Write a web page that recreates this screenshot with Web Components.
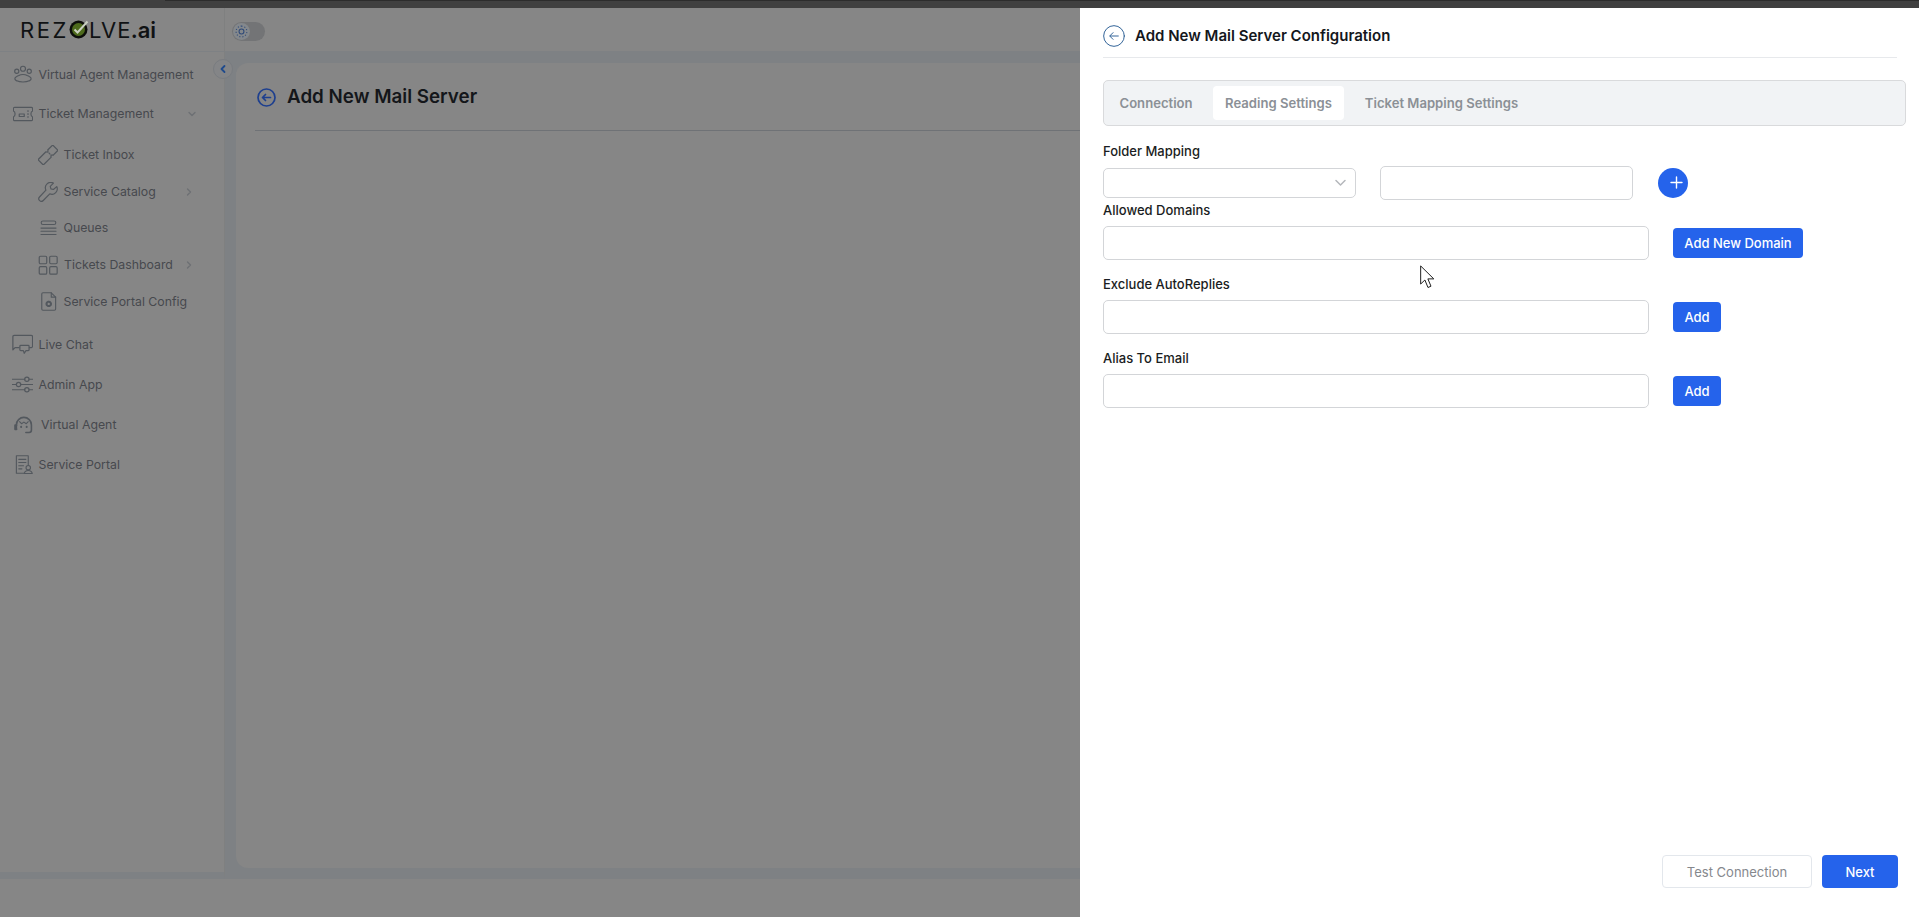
<!doctype html>
<html lang="en"><head><meta charset="utf-8"><title>Add New Mail Server</title>
<style>
html,body{margin:0;height:100%;overflow:hidden;background:#868686;font-family:Inter,"Liberation Sans",sans-serif}
</style></head><body>
<app-shell>
  <side-nav slot="side"></side-nav>
  <main-card slot="main"></main-card>
  <config-drawer slot="drawer"></config-drawer>
</app-shell>
<script>
const ICONS={
 agents:'<circle cx="12" cy="4.500" r="3"/><circle cx="4.500" cy="7.500" r="2.500"/><circle cx="19.500" cy="7.500" r="2.500"/><path d="M7 12.500c2.500-1.500 7.500-1.500 10 0 2 1 3.500 1.500 4.500 3 .8 1.500-.5 3-2 3.500-4 1.800-11 1.800-15 0-1.500-.5-2.800-2-2-3.500 1-1.500 2.500-2 4.500-3z"/>',
 ticket:'<path d="M2 4h20a1.500 1.500 0 0 1 1.500 1.500v3q-2 .8-2 3.500t2 3.500v3A1.500 1.500 0 0 1 22 20H2a1.500 1.500 0 0 1-1.500-1.500v-3q2-.8 2-3.500T.5 8.500v-3A1.500 1.500 0 0 1 2 4z"/><path d="M7.500 12h6v3h-6zM18 8v1M18 11.500v1M18 15v1"/>',
 inbox:'<g transform="rotate(-45 12 12)"><path d="M-.5 7.500H13q.3 1.500 1.500 1.500T16 7.500h8.500v9H16q-.3-1.500-1.500-1.500T13 16.500H-.5z"/><path d="M14.500 11v2"/></g>',
 wrench:'<path d="M22.500 5.500l-4 3.500-3-.8-.8-3 3.800-3.900A6.500 6.500 0 0 0 9.500 9.800L1.800 18a3 3 0 0 0 4.500 4.200l7.800-8a6.500 6.500 0 0 0 8.400-8.700z"/>',
 queues:'<path d="M5 2.500h14a1.800 1.800 0 0 1 0 4.500H5a1.800 1.800 0 0 1 0-4.500zM2.500 11.500h19M2.500 15.500h19M2.500 19.500h19"/>',
 grid:'<rect x="1.500" y="1.500" width="9" height="9" rx="1.500"/><rect x="14" y="1.500" width="9" height="9" rx="1.500"/><rect x="1.500" y="14" width="9" height="9" rx="1.500"/><rect x="14" y="14" width="9" height="9" rx="1.500"/>',
 doc:'<path d="M5 1h10.500l5.500 5.500V21.500a1.500 1.500 0 0 1-1.500 1.500H5a1.500 1.500 0 0 1-1.500-1.500V2.500A1.500 1.500 0 0 1 5 1z"/><path d="M15.500 1v5.500H21"/><circle cx="12.300" cy="15" r="2.800" stroke-dasharray="2.200 .8" stroke-width="2.600"/>',
 chat:'<path d="M20 15.500h2a1.500 1.500 0 0 0 1.500-1.500V3A1.500 1.500 0 0 0 22 1.500H2.500A1.500 1.500 0 0 0 1 3v14.500M8 15.500H3.500L1 18"/><path d="M10 13h8.500a1 1 0 0 1 1 1v4a1 1 0 0 1-1 1H16l-2 3-1-3h-3a1 1 0 0 1-1-1v-4a1 1 0 0 1 1-1z"/>',
 sliders:'<path d="M.5 6h14M19.500 6h4M.5 12h4.500M10 12h13.500M.5 18h14M19.500 18h4"/><circle cx="17" cy="6" r="2.500"/><circle cx="7.500" cy="12" r="2.500"/><circle cx="17" cy="18" r="2.500"/>',
 agent:'<path d="M3 18v-5.500a9.500 9.500 0 0 1 19 0V19a3 3 0 0 1-3 3h-4" stroke-width="2"/><path d="M3 13H1.500v5H3" stroke-width="2.500"/><path d="M7 8.500l2.500 2.500 3-2 3 2 2.500-2.500"/><circle cx="9" cy="15" r=".6"/><circle cx="16" cy="15" r=".6"/>',
 portal:'<path d="M18 12.500V1H3v22h10"/><path d="M6 5.500h9M6 9.500h9M6 13.500h6M6 17.500h4"/><circle cx="18" cy="16" r="2.800"/><path d="M13 23.500q.5-4 5-4t5 4z"/>'
};
const svg=(name,size)=>`<svg width="${size}" height="${size}" viewBox="0 0 24 24" fill="none" stroke="currentColor" stroke-width="1.400" stroke-linecap="round" stroke-linejoin="round">${ICONS[name]}</svg>`;

customElements.define('app-shell',class extends HTMLElement{
 constructor(){super();this.attachShadow({mode:'open'}).innerHTML=`<style>
 :host{display:flex;flex-direction:column;height:917px;position:relative;overflow:hidden;background:#868686}
 .top{height:8px;flex:none;background:#404040}
 .top::before{content:"";display:block;height:1px;margin-left:165px;background:#2c2c2c}
 .body{flex:1;display:grid;grid-template-columns:225px 1fr;grid-template-rows:44px 1fr;min-height:0}
 .brand{border-right:1px solid #7f8080;border-bottom:1px solid #7e8184;display:flex;align-items:center;padding-left:20px}
 .bar{border-bottom:1px solid #7e8184;display:flex;align-items:center;padding:3px 0 0 7px}
 .sidecol{border-right:1px solid #7f8080;height:827px;box-sizing:border-box;border-bottom:7px solid #7e8184;position:relative}
 .maincol{height:827px;box-sizing:border-box;background:#7e8184;padding:11px 0 11px 11px;display:flex}
 .maincol ::slotted(main-card){flex:1}
 .collapse{position:absolute;right:-9px;top:7px;width:20px;height:20px;box-sizing:border-box;border-radius:50%;background:#848587;border:1px solid #797c80;display:flex;align-items:center;justify-content:center;color:#1f4a8c}
 .toggle{width:33px;height:19px;border-radius:10px;background:#737476;position:relative}
 .toggle i{position:absolute;left:1px;top:1px;width:17px;height:17px;border-radius:50%;background:#84888c;display:flex;align-items:center;justify-content:center;color:#2f4a78}
 .logo{font:400 22px/1 Inter,"Liberation Sans",sans-serif;letter-spacing:1.100px;color:#101214;display:flex;align-items:center}
 .logo .rez{letter-spacing:2.600px}
 .logo svg{margin:-1px -1px 0 0;flex:none}
 .ai{font-weight:600;letter-spacing:0;margin-left:-1px}
 </style>
 <div class="top"></div>
 <div class="body">
  <div class="brand"><div class="logo" aria-label="REZOLVE.ai"><span class="rez">REZ</span><svg width="21" height="20" viewBox="0 0 21 20"><circle cx="9.500" cy="10.500" r="9" fill="#0c0d0a"/><circle cx="9.500" cy="10.500" r="6.500" fill="#4d6a1c"/><path d="M5.500 10.500l3 3 10-11" fill="none" stroke="#c9cfc0" stroke-width="2"/></svg><span>LVE</span><span class="ai">.ai</span></div></div>
  <div class="bar"><div class="toggle"><i><svg width="13" height="13" viewBox="0 0 24 24" fill="none" stroke="currentColor" stroke-width="2"><circle cx="12" cy="12" r="4.500"/><path stroke-dasharray="2 3.500" d="M12 2a10 10 0 1 1-.01 0"/></svg></i></div></div>
  <div class="sidecol"><slot name="side"></slot><div class="collapse"><svg width="10" height="10" viewBox="0 0 10 10" fill="none" stroke="currentColor" stroke-width="1.800" stroke-linecap="round" stroke-linejoin="round"><path d="M6.500 2L3.500 5l3 3"/></svg></div></div>
  <div class="maincol"><slot name="main"></slot></div>
 </div>
 <slot name="drawer"></slot>`;}
});

customElements.define('nav-item',class extends HTMLElement{
 constructor(){super();this.attachShadow({mode:'open'}).innerHTML=`<style>
 :host{display:flex;align-items:center;font:400 12.300px/16px Inter,"Liberation Sans",sans-serif;color:#47494e;box-sizing:border-box;position:relative;flex:none}
 .ic{display:flex;color:#53585e;flex:none}
 .lab{white-space:nowrap}
 .car{position:absolute;display:flex;color:#6d7074}
 </style><span class="ic"></span><span class="lab"><slot></slot></span><span class="car"></span>`;}
 connectedCallback(){
  const s=this.shadowRoot,sz=+this.getAttribute('size')||20;
  s.querySelector('.ic').innerHTML=svg(this.getAttribute('icon'),sz);
  this.style.height=(this.getAttribute('h')||40)+'px';
  this.style.paddingLeft=(this.getAttribute('pl')||13)+'px';
  s.querySelector('.lab').style.marginLeft=(this.getAttribute('gap')||5.500)+'px';
  const c=this.getAttribute('caret');
  if(c){const car=s.querySelector('.car');
   car.style.left=(c==='down'?187:184)+'px';
   car.innerHTML=`<svg width="10" height="10" viewBox="0 0 10 10" fill="none" stroke="currentColor" stroke-width="1.300" stroke-linecap="round" stroke-linejoin="round"><path d="${c==='down'?'M2 3.500l3 3 3-3':'M3.500 2l3 3-3 3'}"/></svg>`;}
 }
});

customElements.define('side-nav',class extends HTMLElement{
 constructor(){super();this.attachShadow({mode:'open'}).innerHTML=`<style>
 :host{display:flex;flex-direction:column;padding-top:3px}
 .sub{display:flex;flex-direction:column;padding-top:3.500px}
 .chat{margin-top:4.500px}
 </style>
 <nav-item icon="agents" h="39">Virtual Agent Management</nav-item>
 <nav-item icon="ticket" h="39" caret="down">Ticket Management</nav-item>
 <div class="sub">
 <nav-item icon="inbox" h="36.750" pl="38">Ticket Inbox</nav-item>
 <nav-item icon="wrench" h="36.750" pl="38" gap="5.500" caret="right">Service Catalog</nav-item>
 <nav-item icon="queues" h="36.750" pl="39" size="19" gap="5.500">Queues</nav-item>
 <nav-item icon="grid" h="36.750" pl="38" gap="6" caret="right">Tickets Dashboard</nav-item>
 <nav-item icon="doc" h="36.750" pl="39" gap="5.500" size="19">Service Portal Config</nav-item>
 </div>
 <nav-item class="chat" icon="chat" pl="12" gap="5.500" size="21">Live Chat</nav-item>
 <nav-item icon="sliders" pl="12" gap="5.500" size="21">Admin App</nav-item>
 <nav-item icon="agent" pl="14" gap="8" size="19">Virtual Agent</nav-item>
 <nav-item icon="portal" pl="14" gap="5.500" size="19">Service Portal</nav-item>`;}
});

customElements.define('main-card',class extends HTMLElement{
 constructor(){super();this.attachShadow({mode:'open'}).innerHTML=`<style>
 :host{display:block;background:#868686;border-radius:12px 0 0 12px;padding:0 0 0 19px;font-family:Inter,"Liberation Sans",sans-serif}
 .h{height:66px;padding:1px 0 0 2px;display:flex;align-items:center;gap:11px;border-bottom:1px solid #6f7276}
 h1{margin:0;font:600 18.800px/24px Inter,"Liberation Sans",sans-serif;color:#14161a}
 svg{color:#1d3f8f;flex:none}
 </style>
 <div class="h"><svg width="19" height="19" viewBox="0 0 19 19" fill="none" stroke="currentColor" stroke-width="1.700" stroke-linecap="round" stroke-linejoin="round"><circle cx="9.500" cy="9.500" r="8.500"/><path d="M13.500 9.500h-8M8.500 6.500l-3 3 3 3"/></svg><h1>Add New Mail Server</h1></div>`;}
});

customElements.define('field-input',class extends HTMLElement{
 constructor(){super();this.attachShadow({mode:'open'}).innerHTML=`<style>
 :host{display:block;box-sizing:border-box;border:1px solid #d3d5d8;border-radius:5px;background:#fff;position:relative}
 svg{position:absolute;right:9px;top:50%;margin-top:-5px;color:#b4b7bb}
 </style><slot></slot>`;}
 connectedCallback(){ if(this.hasAttribute('select')) this.shadowRoot.innerHTML+=`<svg width="11" height="10" viewBox="0 0 11 10" fill="none" stroke="currentColor" stroke-width="1.500" stroke-linecap="round" stroke-linejoin="round"><path d="M1 2.500l4.500 4.500L10 2.500"/></svg>`;}
});

customElements.define('ui-button',class extends HTMLElement{
 constructor(){super();this.attachShadow({mode:'open'}).innerHTML=`<style>
 :host{display:inline-flex;align-items:center;justify-content:center;box-sizing:border-box;height:30px;background:#2563eb;color:#fff;border-radius:4px;font:500 13px/16px Inter,"Liberation Sans",sans-serif;white-space:nowrap}
 :host([outline]){background:#fff;color:#85888d;border:1px solid #e3e7ec;font-weight:400}
 </style><slot></slot>`;}
});

customElements.define('tab-strip',class extends HTMLElement{
 constructor(){super();this.attachShadow({mode:'open'}).innerHTML=`<style>
 :host{display:flex;align-items:center;height:46px;box-sizing:border-box;background:#f1f3f5;border:1px solid #d9dadc;border-radius:5px;padding-left:5px;font:600 13.100px/18px Inter,"Liberation Sans",sans-serif;color:#8b9096}
 span{display:flex;align-items:center;height:34px;padding:0 10.500px;box-sizing:border-box;white-space:nowrap}
 .c{margin-right:10px}
 .a{background:#fff;border-radius:4px;padding:0 12px;margin-right:10.500px}
 </style><span class="c">Connection</span><span class="a">Reading Settings</span><span>Ticket Mapping Settings</span>`;}
});

customElements.define('config-drawer',class extends HTMLElement{
 constructor(){super();this.attachShadow({mode:'open'}).innerHTML=`<style>
 :host{position:absolute;left:0;top:8px;right:0;bottom:0;display:flex;justify-content:flex-end;font-family:Inter,"Liberation Sans",sans-serif}
 .panel{width:839px;height:909px;box-sizing:border-box;background:#fff;padding:0 13px 29px 23px;display:flex;flex-direction:column;color:#14171c}
 .head{height:50px;box-sizing:border-box;border-bottom:1px solid #e7e9ec;display:flex;align-items:center;gap:10px;margin-right:9px;padding-top:6px;flex:none}
 .head svg{color:#2a5d94;flex:none}
 h2{margin:0;font:600 15px/20px Inter,"Liberation Sans",sans-serif;color:#14171c}
 tab-strip{margin-top:22px;flex:none}
 label{display:block;font:500 13px/18px Inter,"Liberation Sans",sans-serif;color:#1a1d22}
 .l1{margin-top:16px}
 .rowA{display:flex;align-items:center;margin-top:6px;height:33px}
 .sel{width:253px;height:30px;flex:none}
 .inp2{width:253px;height:34px;margin-left:24px;flex:none}
 .plus{width:30px;height:30px;margin-left:25px;border-radius:50%;background:#2563eb;color:#fff;display:flex;align-items:center;justify-content:center;flex:none}
 .plus svg{margin:0 0 1px 7px}
 .l2{margin-top:2px}
 .row{display:flex;align-items:center;margin-top:7px;height:34px}
 .long{width:546px;height:34px;flex:none}
 .row ui-button{margin-left:24px}
 .l3{margin-top:15px}
 .foot{margin-top:auto;display:flex;justify-content:flex-end;gap:10px;margin-right:8px}
 .foot ui-button{height:33px}
 .test{width:150px}.next{width:76px}
 .cursor{position:absolute;left:1420px;top:257px}
 </style>
 <div class="panel">
  <div class="head"><svg width="22" height="22" viewBox="0 0 23 23" fill="none" stroke="currentColor" stroke-linecap="round" stroke-linejoin="round"><circle cx="11.500" cy="11.500" r="10.800"/><path d="M16 11.500H7.500M10.500 8l-3.500 3.500 3.500 3.500"/></svg><h2>Add New Mail Server Configuration</h2></div>
  <tab-strip></tab-strip>
  <label class="l1">Folder Mapping</label>
  <div class="rowA"><field-input class="sel" select></field-input><field-input class="inp2"></field-input><div class="plus"><svg width="13" height="13" viewBox="0 0 13 13" stroke="currentColor" stroke-width="1.400" stroke-linecap="round"><path d="M6.500 1v11M1 6.500h11"/></svg></div></div>
  <label class="l2">Allowed Domains</label>
  <div class="row"><field-input class="long"></field-input><ui-button style="width:130px">Add New Domain</ui-button></div>
  <label class="l3">Exclude AutoReplies</label>
  <div class="row"><field-input class="long"></field-input><ui-button style="width:48px">Add</ui-button></div>
  <label class="l3">Alias To Email</label>
  <div class="row"><field-input class="long"></field-input><ui-button style="width:48px">Add</ui-button></div>
  <div class="foot"><ui-button outline class="test">Test Connection</ui-button><ui-button class="next">Next</ui-button></div>
 </div>
 <svg class="cursor" width="15" height="24" viewBox="0 0 16 25"><path d="M.7 .7V20l4.500-4.300 3.300 8 3.200-1.400-3.300-7.800h6.300z" fill="#fff" stroke="#111" stroke-width="1"/></svg>`;}
});
</script>
</body></html>
